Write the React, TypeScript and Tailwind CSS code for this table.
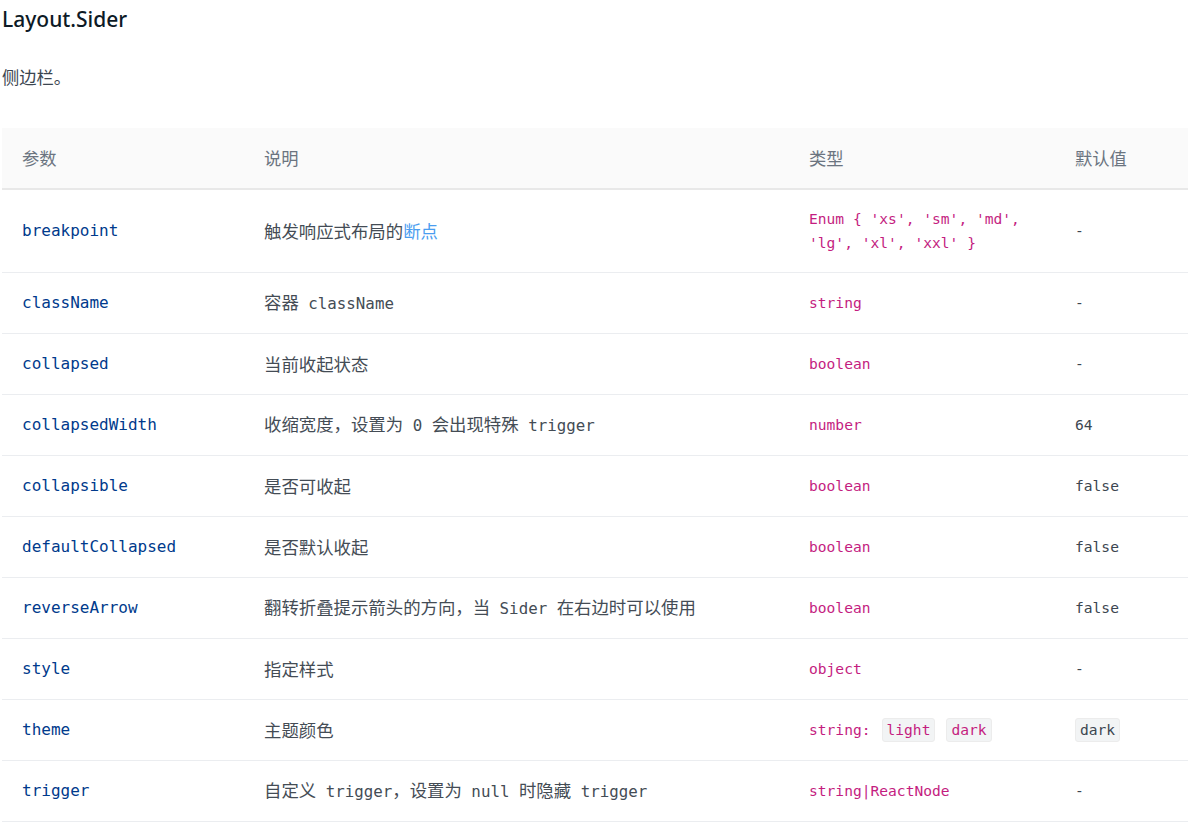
import React from 'react';

const mono = "font-['DejaVu_Sans_Mono',monospace]";

const Code: React.FC<{ children: React.ReactNode }> = ({ children }) => (
  <span className={`${mono} text-[15.8px] whitespace-pre`}>{children}</span>
);

const Tag: React.FC<{ children: React.ReactNode; dark?: boolean }> = ({ children, dark }) => (
  <span
    className={`inline-block rounded-[3px] border border-[#ececec] bg-[#f2f4f5] px-[4px] leading-[22px] ${
      dark ? 'text-[#3c4650]' : 'text-[#c41d7f]'
    }`}
  >
    {children}
  </span>
);

type Row = {
  name: string;
  desc: React.ReactNode;
  type: React.ReactNode;
  def: React.ReactNode;
};

const rows: Row[] = [
  {
    name: 'breakpoint',
    desc: (
      <>
        触发响应式布局的<span className="text-[#4a9df0]">断点</span>
      </>
    ),
    type: (
      <>
        <span className="block">Enum {"{"} 'xs', 'sm', 'md',</span>
        <span className="block">'lg', 'xl', 'xxl' {"}"}</span>
      </>
    ),
    def: '-',
  },
  { name: 'className', desc: <>容器<Code> className</Code></>, type: 'string', def: '-' },
  { name: 'collapsed', desc: '当前收起状态', type: 'boolean', def: '-' },
  {
    name: 'collapsedWidth',
    desc: <>收缩宽度，设置为<Code> 0 </Code>会出现特殊<Code> trigger</Code></>,
    type: 'number',
    def: '64',
  },
  { name: 'collapsible', desc: '是否可收起', type: 'boolean', def: 'false' },
  { name: 'defaultCollapsed', desc: '是否默认收起', type: 'boolean', def: 'false' },
  {
    name: 'reverseArrow',
    desc: <>翻转折叠提示箭头的方向，当<Code> Sider </Code>在右边时可以使用</>,
    type: 'boolean',
    def: 'false',
  },
  { name: 'style', desc: '指定样式', type: 'object', def: '-' },
  {
    name: 'theme',
    desc: '主题颜色',
    type: (
      <span className="flex items-center gap-[11px]">
        <span>string:</span>
        <Tag>light</Tag>
        <Tag>dark</Tag>
      </span>
    ),
    def: <Tag dark>dark</Tag>,
  },
  {
    name: 'trigger',
    desc: <>自定义<Code> trigger</Code>，设置为<Code> null </Code>时隐藏<Code> trigger</Code></>,
    type: 'string|ReactNode',
    def: '-',
  },
];

const grid = 'grid grid-cols-[242px_545px_266px_133px]';

const App: React.FC = () => {
  return (
    <div className="min-h-[827px] bg-white pl-[2px] font-['Noto_Sans','Noto_Sans_CJK_SC',sans-serif]">
      <h2 className="text-[21px] font-medium leading-[38px] text-[#0d1a26]">Layout.Sider</h2>
      <p className="mt-[25px] text-[17.3px] leading-[28px] text-[#3c4650] font-['Noto_Sans_CJK_SC',sans-serif]">
        侧边栏。
      </p>

      <div className="mt-[37px] w-[1186px]">
        {/* Header */}
        <div
          className={`${grid} h-[62px] items-center border-b-2 border-[#e8e8e8] bg-[#fafafa] text-[17.3px] text-[#6b7480] font-['Noto_Sans_CJK_SC',sans-serif]`}
        >
          <div className="pl-[20px]">参数</div>
          <div className="pl-[20px]">说明</div>
          <div className="pl-[20px]">类型</div>
          <div className="pl-[20px]">默认值</div>
        </div>

        {rows.map((r, i) => (
          <div
            key={r.name}
            className={`${grid} items-center border-b border-[#ebedf0] ${i === 0 ? 'h-[83px]' : 'h-[61px]'}`}
          >
            <div className={`pl-[20px] ${mono} text-[16px] text-[#003a8c]`}>{r.name}</div>
            <div className="pl-[20px] text-[17.4px] leading-[24px] text-[#444c55] font-['Noto_Sans_CJK_SC',sans-serif]">
              {r.desc}
            </div>
            <div className={`pl-[20px] ${mono} text-[14.6px] leading-[24px] text-[#c41d7f]`}>{r.type}</div>
            <div className={`pl-[20px] ${mono} text-[14.6px] leading-[24px] text-[#3c4650]`}>{r.def}</div>
          </div>
        ))}
      </div>
    </div>
  );
};

export default App;
